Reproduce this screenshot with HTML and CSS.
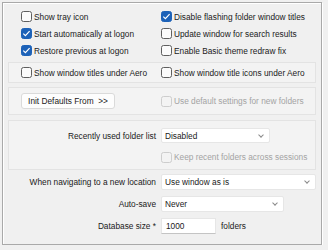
FILE: index.html
```html
<!DOCTYPE html>
<html lang="en">
  <head>
    <meta charset="UTF-8" />
    <title>Options</title>
    <link rel="stylesheet" href="styles.css">
  </head>
  <body>
    <div class="frame">
      <div class="opts">
        <label class="check"><span class="box"></span>Show tray icon</label>
        <label class="check"><span class="box on"></span>Disable flashing folder window titles</label>
        <label class="check"><span class="box on"></span>Start automatically at logon</label>
        <label class="check"><span class="box"></span>Update window for search results</label>
        <label class="check"><span class="box on"></span>Restore previous at logon</label>
        <label class="check"><span class="box"></span>Enable Basic theme redraw fix</label>
      </div>

      <div class="panel aero">
        <label class="check"><span class="box"></span>Show window titles under Aero</label>
        <label class="check"><span class="box"></span>Show window title icons under Aero</label>
      </div>

      <div class="panel defaults">
        <button type="button" class="btn">Init Defaults From &nbsp;&gt;&gt;</button>
        <label class="check disabled"><span class="box"></span>Use default settings for new folders</label>
      </div>

      <div class="panel recent">
        <span class="lbl">Recently used folder list</span>
        <div class="select w-disabled">Disabled<span class="chev"></span></div>
        <span></span>
        <label class="check disabled"><span class="box"></span>Keep recent folders across sessions</label>
      </div>

      <div class="form">
        <span class="lbl">When navigating to a new location</span>
        <div class="select w-nav">Use window as is<span class="chev"></span></div>
        <span class="lbl">Auto-save</span>
        <div class="select w-never">Never<span class="chev"></span></div>
        <span class="lbl">Database size *</span>
        <div class="size-row">
          <input type="text" class="num" value="1000" />
          <span>folders</span>
        </div>
      </div>
    </div>
  </body>
</html>
```
FILE: styles.css
```css
* {
  margin: 0;
  padding: 0;
  box-sizing: border-box;
}

body {
  background-color: #f0f0f0;
  font-family: 'Liberation Sans', Arial, sans-serif;
  font-size: 8.3px;
  color: #1a1a1a;
}

.frame {
  margin: 2px 0 0 2px;
  width: 320px;
  height: 243px;
  border: 1px solid #a9a9a9;
  box-shadow: inset 1px 1px 0 #fff, 1px 1px 0 #fff;
}

/* checkboxes */
.check {
  display: flex;
  align-items: center;
  gap: 2px;
  white-space: nowrap;
}

.box {
  width: 11px;
  height: 11px;
  border: 1px solid #5f5f5f;
  border-radius: 2.5px;
  background-color: #fbfbfb;
  flex-shrink: 0;
}

.box.on {
  border-color: #1d62b8;
  background: #1d62b8 url("data:image/svg+xml;utf8,<svg xmlns='http://www.w3.org/2000/svg' viewBox='0 0 11 11'><polyline points='2.3,5.6 4.4,7.6 8.6,3.2' fill='none' stroke='white' stroke-width='1.2'/></svg>") center / 11px 11px no-repeat;
}

.check.disabled {
  color: #a3a3a3;
}

.check.disabled .box {
  border-color: #cdcdcd;
  background-color: #f3f3f3;
}

.opts {
  display: grid;
  grid-template-columns: 140px 1fr;
  grid-auto-rows: 17px;
  padding: 5px 0 0 18px;
}

/* grouped panels */
.panel {
  margin-left: 5px;
  width: 308px;
  border: 1px solid #e3e3e3;
  background-color: #f3f3f3;
  display: grid;
  align-items: center;
}

.aero {
  margin-top: 3px;
  height: 21px;
  grid-template-columns: 140px 1fr;
  padding-left: 12px;
}

.defaults {
  margin-top: 4px;
  height: 28px;
  grid-template-columns: 140px 1fr;
  padding-left: 12px;
}

.btn {
  width: 94px;
  height: 16px;
  font: inherit;
  color: #1a1a1a;
  background-color: #fdfdfd;
  border: 1px solid #dadada;
  border-radius: 3px;
}

.recent {
  margin-top: 5px;
  height: 50px;
  grid-template-columns: 147px 1fr;
  grid-template-rows: 15px 14px;
  column-gap: 5px;
  row-gap: 7px;
  align-content: start;
  padding-top: 7px;
}

.lbl {
  text-align: right;
  white-space: nowrap;
}

/* dropdowns */
.select {
  position: relative;
  height: 100%;
  display: flex;
  align-items: center;
  padding-left: 3px;
  background-color: #fff;
  border: 1px solid #e6e6e6;
  border-radius: 2px;
}

.chev {
  position: absolute;
  right: 6px;
  top: 50%;
  width: 4px;
  height: 4px;
  margin-top: -3px;
  border-right: 1px solid #8a8a8a;
  border-bottom: 1px solid #8a8a8a;
  transform: rotate(45deg);
}

.w-disabled { width: 109px; }
.w-nav { width: 155px; }
.w-never { width: 123px; }

.form {
  display: grid;
  grid-template-columns: 153px 1fr;
  grid-template-rows: 16px 16px 16px;
  column-gap: 5px;
  row-gap: 6px;
  align-items: center;
  margin-top: 4px;
}

.size-row {
  display: flex;
  align-items: center;
  gap: 5px;
  height: 100%;
}

.num {
  width: 55px;
  height: 16px;
  padding-left: 4px;
  font: inherit;
  color: #1a1a1a;
  background-color: #fff;
  border: 1px solid #e6e6e6;
  border-bottom-color: #c4c4c4;
  outline: none;
}
```
